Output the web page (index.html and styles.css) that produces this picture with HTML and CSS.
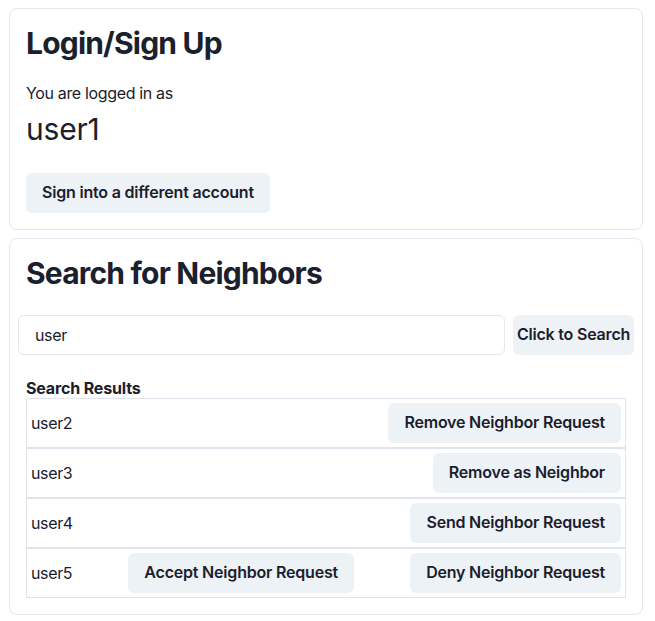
FILE: index.html
```html
<!DOCTYPE html>
<html lang="en">
<head>
<meta charset="utf-8">
<title>Neighbors</title>
<link rel="stylesheet" href="styles.css">
</head>
<body>
<div class="page">
  <section class="card">
    <h2 class="heading">Login/Sign Up</h2>
    <p class="label">You are logged in as</p>
    <p class="username">user1</p>
    <button class="btn btn-signin">Sign into a different account</button>
  </section>
  <section class="card">
    <h2 class="heading">Search for Neighbors</h2>
    <div class="search-row">
      <input class="search-input" type="text" value="user">
      <button class="btn btn-search">Click to Search</button>
    </div>
    <h3 class="results-title">Search Results</h3>
    <div class="results">
      <div class="result-row">
        <span class="result-name">user2</span>
        <button class="btn">Remove Neighbor Request</button>
      </div>
      <div class="result-row">
        <span class="result-name">user3</span>
        <button class="btn">Remove as Neighbor</button>
      </div>
      <div class="result-row">
        <span class="result-name">user4</span>
        <button class="btn">Send Neighbor Request</button>
      </div>
      <div class="result-row">
        <span class="result-name">user5</span>
        <button class="btn">Accept Neighbor Request</button>
        <button class="btn">Deny Neighbor Request</button>
      </div>
    </div>
  </section>
</div>
</body>
</html>
```

FILE: styles.css
```css
* {
  box-sizing: border-box;
}

html, body {
  margin: 0;
  padding: 0;
  background: #ffffff;
}

body {
  font-family: Inter, "Noto Sans", "Liberation Sans", sans-serif;
  font-size: 16px;
  line-height: 1.5;
  color: #1a202c;
  letter-spacing: -0.35px;
}

.page {
  display: flex;
  flex-direction: column;
  gap: 8px;
  padding: 8px 12px 0 9px;
}

.card {
  border: 1px solid #e2e8f0;
  border-radius: 8px;
  padding: 16px;
  display: flex;
  flex-direction: column;
  align-items: flex-start;
}

.heading {
  margin: 0;
  font-size: 30px;
  line-height: 1.2;
  font-weight: 700;
  letter-spacing: -0.8px;
}

.label {
  margin: 20px 0 0;
  font-size: 16px;
  line-height: 24px;
}

.username {
  margin: 2px 0 0;
  font-size: 30px;
  line-height: 45px;
  letter-spacing: -0.2px;
}

.btn {
  font-family: inherit;
  font-size: 16px;
  font-weight: 600;
  line-height: 1.2;
  letter-spacing: -0.2px;
  color: #1a202c;
  background: #edf2f7;
  border: none;
  border-radius: 6px;
  height: 40px;
  padding: 0 16px;
  white-space: nowrap;
  cursor: pointer;
}

.btn-signin {
  margin-top: 21px;
}

.search-row {
  align-self: stretch;
  display: flex;
  gap: 8px;
  margin: 24px -8px 0;
}

.search-input {
  flex: 1;
  min-width: 0;
  height: 40px;
  border: 1px solid #e2e8f0;
  border-radius: 6px;
  padding: 0 16px;
  font-family: inherit;
  font-size: 16px;
  letter-spacing: -0.35px;
  color: #1a202c;
  background: #fff;
  outline: none;
}

.btn-search {
  width: 121px;
  padding: 0;
}

.results-title {
  margin: 23px 0 0;
  font-size: 16px;
  line-height: 20px;
  font-weight: 700;
  letter-spacing: -0.15px;
}

.results {
  align-self: stretch;
  display: flex;
  flex-direction: column;
}

.result-row {
  display: flex;
  justify-content: space-between;
  align-items: center;
  border: 1px solid #dfe4ec;
  padding: 4px;
}

.result-name {
  font-size: 16px;
  line-height: 24px;
}
```
